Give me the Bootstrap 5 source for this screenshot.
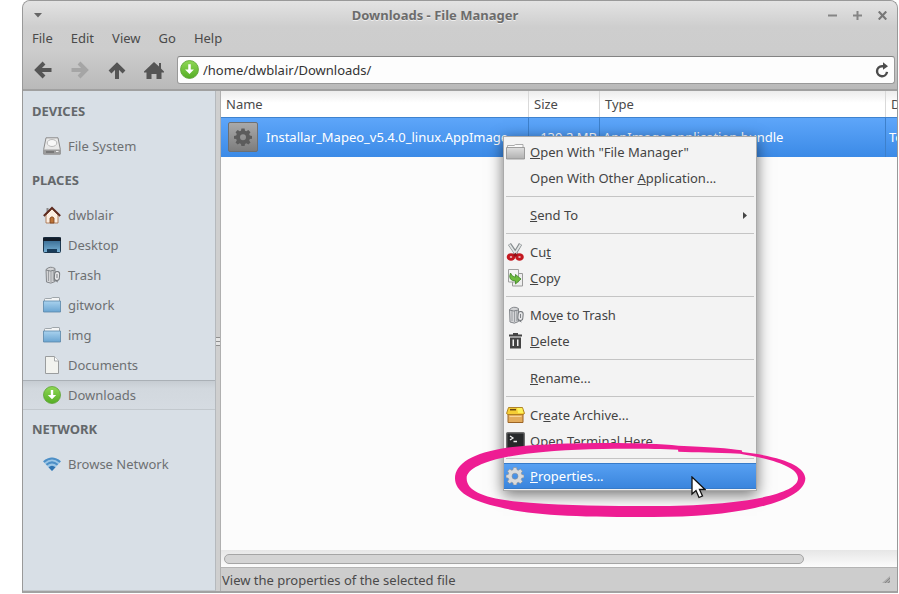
<!DOCTYPE html>
<html lang="en">
<head>
<meta charset="utf-8">
<meta name="viewport" content="width=device-width, initial-scale=1">
<title>Downloads - File Manager</title>
<link href="https://cdn.jsdelivr.net/npm/bootstrap@5.3.0/dist/css/bootstrap.min.css" rel="stylesheet">
<style>
  body { font-family: "Noto Sans", "Open Sans", sans-serif; font-size: 13px; line-height: 18px; color: #4a4a4a; background: #fff; }
  button, input { font: inherit; color: inherit; }
  button { border: 0; background: none; padding: 0; }
  svg { display: block; flex: none; }
  .fm-window { min-height: 100vh; margin: 0 1px 0 22px; padding-bottom: 1px; }
  .fm-frame { border: 1px solid #999; border-bottom: 2px solid #a2a2a2; border-radius: 8px 8px 0 0; background: #cdcdcd; overflow: hidden; }
  .fm-top { background: linear-gradient(#e3e3e3 0, #cecece 26px, #cdcdcd 48px, #b9b9b9 88px); border-bottom: 2px solid #a0a0a0; }
  .fm-title { height: 28px; padding: 0 10px 0 11px; color: #6c6c6c; font-weight: 700; text-shadow: 0 1px #eee; }
  .fm-menubar { height: 21px; padding: 0 0 4px 9px; gap: 18px; }
  .fm-toolbar { height: 39px; padding: 0 2px 0 10px; }
  .fm-nav { gap: 17px; width: 144px; }
  .fm-path { height: 28px; background: #fdfdfd; border: 1px solid #999; border-top-color: #828282; border-radius: 3px; padding: 0 5px 0 2px; gap: 4px; }
  .fm-path input { border: 0; outline: 0; background: transparent; min-width: 0; padding: 0; color: #333; }
  .fm-side { width: 193px; padding-top: 1px; background: #d8dfe6; border-bottom: 1px solid #c3c8cc; border-right: 1px solid #b5b9bd; color: #6d7072; }
  .fm-side h2 { font-size: 13px; line-height: 18px; font-weight: 700; height: 39px; margin: 0; padding: 10px 0 0 9px; color: #64686b; }
  .fm-side a { height: 30px; padding-left: 20px; gap: 7px; color: inherit; text-decoration: none; }
  .fm-side a.chosen { border-top: 1px solid #aab0b6; border-bottom: 1px solid #c2c8cd; background: linear-gradient(#c6ccd2, #d2d8de 8px, #d5dbe1); }
  .fm-split { width: 5px; background: #cfcfcf; border-right: 1px solid #b0b0b0; }
  .fm-grip { width: 4px; height: 9px; background: repeating-linear-gradient(#8f8f8f 0 1px, #e4e4e4 1px 4px); }
  .fm-view { background: #fcfcfc; min-width: 0; }
  .fm-files { width: calc(100% + 109px); table-layout: fixed; border-collapse: separate; border-spacing: 0; }
  .fm-files th { height: 26px; font-weight: 400; padding: 0 5px; background: linear-gradient(#ececec, #fff 12px); border-right: 1px solid #d9d9d9; color: #4a4a4a; }
  .fm-files td { height: 40px; padding: 0 3px 1px; background: linear-gradient(#5ea6fa, #3b8ae6); border-top: 1px solid #3f83cf; border-right: 1px solid #3d80cb; color: #fff; white-space: nowrap; }
  .fm-files td:nth-child(2) { text-align: right; padding-right: 2px; }
  .c-name { width: 308px; } .c-size { width: 71px; } .c-date { width: 120px; }
  .fm-scroll { height: 17px; padding: 4px 3px; background: linear-gradient(#e6e6e6, #fcfcfc); }
  .fm-thumb { width: 86.5%; height: 10px; border: 1px solid #a5a5a5; border-radius: 5px; background: #d4d4d4; }
  .fm-status { height: 24px; padding: 0 6px 0 1px; border-top: 1px solid #b4b4b4; }
  .fm-popup { left: 503px; top: 136px; width: 254px; padding: 2px 0 1px; background: #f3f3f3; border: 1px solid #aaa; box-shadow: 0 4px 14px rgba(0,0,0,.55); }
  .fm-popup button { height: 26px; padding: 0 9px 0 2px; gap: 5px; text-align: left; color: #444; }
  .fm-popup hr { margin: 5px 2px; border: 0; height: 1px; background: #c4c4c4; opacity: 1; }
  .fm-popup hr:last-of-type { margin: 4px 2px; }
  .fm-popup button.hot { color: #fff; background: linear-gradient(#57a0f2, #3a85dd); border-top: 1px solid #377bc9; border-bottom: 1px solid #377bc9; }
  .fm-slot { width: 19px; }
  .fm-ring { left: 440px; top: 420px; pointer-events: none; }
  .fm-pointer { left: 691px; top: 476px; pointer-events: none; }
</style>
<script src="https://cdn.jsdelivr.net/npm/bootstrap@5.3.0/dist/js/bootstrap.bundle.min.js"></script>
</head>
<body class="position-relative overflow-hidden">
<svg width="0" height="0" class="position-absolute" aria-hidden="true">
  <defs>
    <linearGradient id="gGreen" x2="0" y2="1"><stop stop-color="#8fd855"/><stop offset="1" stop-color="#55ad25"/></linearGradient>
    <linearGradient id="gBlue" x2="0" y2="1"><stop stop-color="#a9d2ee"/><stop offset="1" stop-color="#6aa5d2"/></linearGradient>
    <linearGradient id="gGray" x2="0" y2="1"><stop stop-color="#dedede"/><stop offset="1" stop-color="#b0b0b0"/></linearGradient>
    <linearGradient id="gTile" x2="0" y2="1"><stop stop-color="#aaa"/><stop offset="1" stop-color="#7c7c7c"/></linearGradient>
    <linearGradient id="gDesk" x2="0" y2="1"><stop stop-color="#2d5e86"/><stop offset="1" stop-color="#78b2d6"/></linearGradient>
  </defs>
  <symbol id="i-down" viewBox="0 0 18 18"><circle cx="9" cy="9" r="8.5" fill="url(#gGreen)" stroke="#5da235" stroke-width=".8"/><path d="M7.800 4h2.400v5h3L9 13.200 4.800 9h3z" fill="#fff"/></symbol>
  <symbol id="i-folder" viewBox="0 0 18 18"><path d="M1.500 6V3.500q0-1 1-1H8l1.500-1H16q.5 0 .5.600V7z" fill="#f4f5f5" stroke="#8d9499" stroke-width=".8"/><path d="M.5 5h17v11H.5z" fill="url(#gBlue)" stroke="#5b86a8" stroke-width=".8"/></symbol>
  <symbol id="i-trash" viewBox="0 0 18 18"><path d="M3 3.500Q7-.5 12 2.500v13Q8 18.500 3.500 16z" fill="#d3d4d6" stroke="#85888c"/><path d="M5.500 5v10M8 5v11M10.300 5v10" stroke="#9b9ea2"/><path d="M3 4q4 2 9 0" fill="none" stroke="#7e8286"/><rect x="11.500" y="5.500" width="5" height="9" rx="2.500" fill="#e6e6e8" stroke="#74787c" transform="rotate(5 14 10)"/><path d="M14 8v4M11 14l4 2" stroke="#7e8286" fill="none"/></symbol>
  <symbol id="i-gear" viewBox="0 0 18 18"><path fill-rule="evenodd" d="M7.400.5h3.200l.4 2.200 1.400.6 1.900-1.300 2.200 2.200-1.300 1.900.6 1.400 2.200.4v2.800l-2.200.4-.6 1.400 1.300 1.900-2.200 2.200-1.900-1.300-1.400.6-.4 2.200H7.400L7 15.900l-1.400-.6-1.900 1.300-2.200-2.200 1.300-1.900-.6-1.400-2.200-.4V7.900l2.200-.4.6-1.400-1.300-1.900 2.200-2.200 1.900 1.300L7 2.700zM9 6.200a3 3 0 1 0 0 6 3 3 0 0 0 0-6z"/></symbol>
</svg>

<div class="fm-window d-flex flex-column">
<div class="fm-frame d-flex flex-column flex-grow-1">
  <header class="fm-top">
    <div class="fm-title d-flex align-items-center justify-content-between">
      <button type="button" aria-label="Window menu"><svg width="8" height="6"><path d="M0 1h8L4 5.500z" fill="#666"/></svg></button>
      <div class="flex-grow-1 text-center">Downloads - File Manager</div>
      <div class="d-flex align-items-center gap-3">
        <button type="button" aria-label="Minimize"><svg width="9" height="9"><path d="M0 4.500h9" stroke="#858585" stroke-width="2"/></svg></button>
        <button type="button" aria-label="Maximize"><svg width="9" height="9"><path d="M0 4.500h9M4.500 0v9" stroke="#858585" stroke-width="2"/></svg></button>
        <button type="button" aria-label="Close"><svg width="9" height="9"><path d="M.7.500l7.600 8M8.300.500L.7 8.500" stroke="#777" stroke-width="2.200"/></svg></button>
      </div>
    </div>
    <nav class="fm-menubar d-flex align-items-center">
      <button type="button">File</button><button type="button">Edit</button><button type="button">View</button><button type="button">Go</button><button type="button">Help</button>
    </nav>
    <div class="fm-toolbar d-flex align-items-center">
      <div class="fm-nav d-flex align-items-center">
        <button type="button" aria-label="Back"><svg width="20" height="20" viewBox="0 0 20 20"><path d="M18.500 10H5M11 3l-7 7 7 7" fill="none" stroke="#555" stroke-width="4"/></svg></button>
        <button type="button" aria-label="Forward" disabled><svg width="20" height="20" viewBox="0 0 20 20"><path d="M1.500 10H15M9 3l7 7-7 7" fill="none" stroke="#a5a5a5" stroke-width="4"/></svg></button>
        <button type="button" aria-label="Up"><svg width="20" height="20" viewBox="0 0 20 20"><path d="M10 19V5.500M3 12l7-7 7 7" fill="none" stroke="#555" stroke-width="4"/></svg></button>
        <button type="button" aria-label="Home"><svg width="20" height="20" viewBox="0 0 20 20"><path d="M0 11.500L10 2l5 4.500V3h2v5.500l3 3v1h-2.500V19h-5v-5h-5v5h-5v-6.500H0z" fill="#555"/></svg></button>
      </div>
      <div class="fm-path d-flex align-items-center flex-grow-1">
        <svg width="19" height="19"><use href="#i-down"/></svg>
        <input class="flex-grow-1" type="text" aria-label="Location" value="/home/dwblair/Downloads/">
        <button type="button" aria-label="Reload"><svg width="14" height="16" viewBox="0 0 14 16"><path d="M9.500 4.200H7A5 5 0 1 0 12 9.800" fill="none" stroke="#4c4c4c" stroke-width="2.400"/><path d="M8 .3l5 3.900-5 3.600z" fill="#4c4c4c"/></svg></button>
      </div>
    </div>
  </header>

  <div class="d-flex flex-grow-1">
    <aside class="fm-side flex-shrink-0">
      <h2>DEVICES</h2>
      <a class="d-flex align-items-center" href="#"><svg width="18" height="18" viewBox="0 0 18 18"><path d="M3 .8h12l2.300 11.500v4.900H.7v-4.900z" fill="#e9e9e9" stroke="#8a8a8a"/><ellipse cx="9" cy="6" rx="4.800" ry="3.500" fill="#f8f8f8" stroke="#bbb"/><path d="M1 12.500h16v4.500H1z" fill="#9c9c9c"/><path d="M3 15h8" stroke="#555"/><path d="M13 14.500h2.500" stroke="#eee"/></svg>File System</a>
      <h2>PLACES</h2>
      <a class="d-flex align-items-center" href="#"><svg width="18" height="18" viewBox="0 0 18 18"><path d="M3 9l6-6 6 6v8H3z" fill="#fbeee2" stroke="#a5673f" stroke-width=".8"/><path d="M3.500 2h2v4h-2z" fill="#888"/><path d="M.8 10L9 1.800l8.200 8.200" fill="none" stroke="#5d2b20" stroke-width="2"/><path d="M7 17v-5q2-2.500 4 0v5z" fill="#bd7438" stroke="#7b431e" stroke-width=".8"/></svg>dwblair</a>
      <a class="d-flex align-items-center" href="#"><svg width="18" height="18" viewBox="0 0 18 18"><rect x=".5" y="1.500" width="17" height="15" rx="1" fill="url(#gDesk)" stroke="#1d3850"/><path d="M0 1.500h18V5H0z" fill="#131d2a"/><path d="M4 13h10v3H4z" fill="#183b59"/></svg>Desktop</a>
      <a class="d-flex align-items-center" href="#"><svg width="18" height="18"><use href="#i-trash"/></svg>Trash</a>
      <a class="d-flex align-items-center" href="#"><svg width="18" height="18"><use href="#i-folder"/></svg>gitwork</a>
      <a class="d-flex align-items-center" href="#"><svg width="18" height="18"><use href="#i-folder"/></svg>img</a>
      <a class="d-flex align-items-center" href="#"><svg width="18" height="18" viewBox="0 0 18 18"><path d="M2.500.5h9l4 4.500v12.500h-13z" fill="#f2f3ef" stroke="#9a9d9e"/><path d="M11.500.5V5h4" fill="#fff" stroke="#a5a8a9"/></svg>Documents</a>
      <a class="chosen d-flex align-items-center" href="#" aria-current="page"><svg width="18" height="18"><use href="#i-down"/></svg>Downloads</a>
      <h2>NETWORK</h2>
      <a class="d-flex align-items-center" href="#"><svg width="18" height="18" viewBox="0 0 18 18"><path d="M0 6.500Q9-1 18 6.500L9 16z" fill="#9cc6e6"/><path d="M.8 7Q9 0 17.200 7M3.400 9.700q5.600-4.700 11.200 0" fill="none" stroke="#4d8fc6" stroke-width="2"/><path d="M5.500 12.200q3.500-3 7 0L9 16z" fill="#2f73b0"/></svg>Browse Network</a>
    </aside>
    <div class="fm-split d-flex align-items-center flex-shrink-0"><div class="fm-grip"></div></div>
    <div class="d-flex flex-column flex-grow-1 overflow-hidden">
    <main class="fm-view d-flex flex-column flex-grow-1 overflow-hidden">
      <div class="flex-grow-1 overflow-hidden">
        <table class="fm-files">
          <colgroup><col class="c-name"><col class="c-size"><col><col class="c-date"></colgroup>
          <thead><tr><th scope="col">Name</th><th scope="col">Size</th><th scope="col">Type</th><th scope="col">Date Modified</th></tr></thead>
          <tbody><tr>
            <td><div class="d-flex align-items-center gap-2 ps-1"><svg width="30" height="30" viewBox="0 0 30 30"><rect x=".5" y=".5" width="29" height="29" rx="1.500" fill="url(#gTile)" stroke="#6d7073"/><use href="#i-gear" x="6" y="6" width="18" height="18" fill="#5c5c5c"/></svg><span>Installar_Mapeo_v5.4.0_linux.AppImage</span></div></td>
            <td>139.2 MB</td><td>AppImage application bundle</td><td>Today</td>
          </tr></tbody>
        </table>
      </div>
      <div class="fm-scroll"><div class="fm-thumb"></div></div>
    </main>
    <footer class="fm-status d-flex align-items-center justify-content-between">
      <span>View the properties of the selected file</span>
      <svg width="9" height="8"><path d="M8 0v7H0z" fill="#aaa"/><path d="M8 2L3 7M8 5L6 7" stroke="#888"/></svg>
    </footer>
    </div>
  </div>
</div>
</div>

<div class="fm-popup position-absolute d-flex flex-column" role="menu">
  <button type="button" role="menuitem" class="d-flex align-items-center"><svg width="19" height="18" viewBox="0 0 19 18"><path d="M1.500 6V2.500H8l1.500-1H17V6z" fill="#fafafa" stroke="#999" stroke-width=".8"/><path d="M.5 4.500h18v11.500H.5z" fill="url(#gGray)" stroke="#8c8c8c" stroke-width=".8"/></svg><span><u>O</u>pen With "File Manager"</span></button>
  <button type="button" role="menuitem" class="d-flex align-items-center"><span class="fm-slot"></span><span>Open With Other <u>A</u>pplication...</span></button>
  <hr>
  <button type="button" role="menuitem" class="d-flex align-items-center"><span class="fm-slot"></span><span class="flex-grow-1"><u>S</u>end To</span><svg width="4" height="7"><path d="M0 0l4 3.500L0 7z" fill="#444"/></svg></button>
  <hr>
  <button type="button" role="menuitem" class="d-flex align-items-center"><svg width="19" height="18" viewBox="0 0 19 18"><path d="M3.500 1l7.500 11M14.500 1L8 12" stroke="#858b8d" stroke-width="3.600"/><path d="M3.500 1.500L10.500 12M14.500 1.500L8 12" stroke="#e2e5e5" stroke-width="1.800"/><ellipse cx="5" cy="14" rx="2.800" ry="2.300" fill="#eee" stroke="#c31820" stroke-width="3"/><ellipse cx="13.500" cy="14" rx="2.800" ry="2.300" fill="#eee" stroke="#c31820" stroke-width="3"/><path d="M7 12l2.300-2.200L11.500 12l-2.200 2z" fill="#8e1218"/></svg><span>Cu<u>t</u></span></button>
  <button type="button" role="menuitem" class="d-flex align-items-center"><svg width="19" height="18" viewBox="0 0 19 18"><path d="M6.500 4.500h10v12.500h-10z" fill="#eee" stroke="#999"/><path d="M2.500.5h10V13h-10z" fill="#f4f4f4" stroke="#a0a0a0"/><path d="M4.500 4q-3 7.500 5 8V15l5.500-5-5.500-4.500v2.700Q6 8 4.500 4z" fill="#6cbb3c" stroke="#3f8426" stroke-width=".8"/></svg><span><u>C</u>opy</span></button>
  <hr>
  <button type="button" role="menuitem" class="d-flex align-items-center"><svg width="19" height="18"><use href="#i-trash"/></svg><span>Mo<u>v</u>e to Trash</span></button>
  <button type="button" role="menuitem" class="d-flex align-items-center"><svg width="19" height="18" viewBox="0 0 19 18"><path d="M3 2.500h4V1h5v1.500h4v2H3z" fill="#444"/><path fill-rule="evenodd" d="M4 5.500h11v11H4zM6.500 7.500V14H8V7.500zm4.500 0V14h1.500V7.500z" fill="#444"/></svg><span><u>D</u>elete</span></button>
  <hr>
  <button type="button" role="menuitem" class="d-flex align-items-center"><span class="fm-slot"></span><span><u>R</u>ename...</span></button>
  <hr>
  <button type="button" role="menuitem" class="d-flex align-items-center"><svg width="19" height="18" viewBox="0 0 19 18"><path d="M2 7h15v9.500H2z" fill="#e3ac5c" stroke="#9c6425"/><path d="M.5 7.500L2.500 1.500h14l2 6-1.500 1H2z" fill="#f5cd35" stroke="#a8791d" stroke-width=".9"/><path d="M11 2h5l1.500 5H12z" fill="#fdf35b"/><path d="M4 3.700h6" stroke="#6c4a12" stroke-width="1.500"/><path d="M3.500 10.500h12" stroke="#f5d49a"/></svg><span>Cr<u>e</u>ate Archive...</span></button>
  <button type="button" role="menuitem" class="d-flex align-items-center"><svg width="19" height="18" viewBox="0 0 19 18"><rect x=".7" y=".7" width="17.600" height="16.600" rx="1" fill="#26282a" stroke="#6d6d6d" stroke-width="1.400"/><path d="M4 4l3 2-3 2M7.500 9.500H11" fill="none" stroke="#eee" stroke-width="1.300"/></svg><span>Open Terminal Here</span></button>
  <hr>
  <button type="button" role="menuitem" class="hot d-flex align-items-center"><svg width="19" height="18" viewBox="0 0 19 18"><use href="#i-gear" width="18" height="18" fill="#d9dadb" stroke="#8b8f94" stroke-width=".6"/></svg><span><u>P</u>roperties...</span></button>
</div>

<svg class="fm-ring position-absolute" width="380" height="110" viewBox="0 0 1140 330" aria-hidden="true"><path fill="#ee1d93" fill-rule="evenodd" d="M45 175C45 130 100 98 200 83C330 67 600 65 715 77Q850 82 905 91L907 96C1030 110 1096 140 1096 175C1096 245 900 291 640 291C420 291 280 287 180 262C90 242 45 215 45 175ZM80 175C80 220 150 240 270 248C380 256 500 258 640 258C880 258 1074 228 1074 175C1074 142 1000 118 900 101C820 96 770 98 715 95L714 89C600 84 400 84 280 99C160 112 80 140 80 175Z"/></svg>
<svg class="fm-pointer position-absolute" width="15" height="23" viewBox="0 0 15 23" aria-hidden="true"><path d="M1 1v17l4-3.500 3 7 3.500-1.500-3-6.500H14z" fill="#fff" stroke="#111" stroke-width="1.300"/></svg>
</body>
</html>
